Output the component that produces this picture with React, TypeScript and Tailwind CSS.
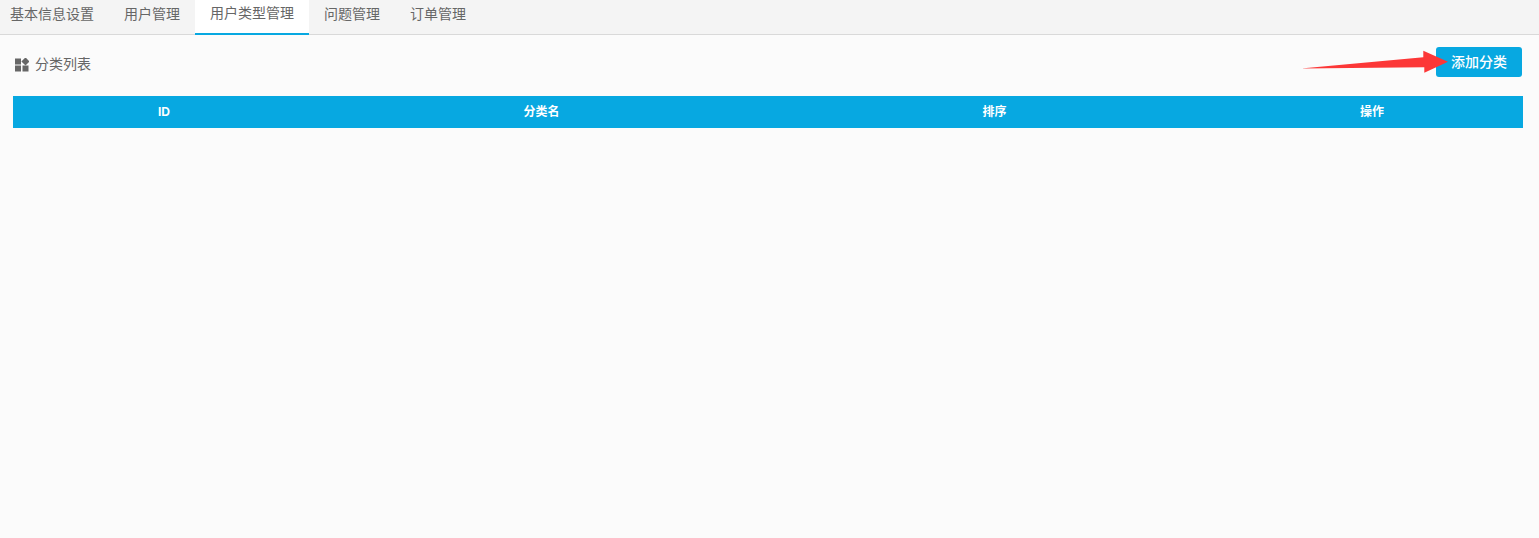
export default function App() {
  const tabs = ["基本信息设置", "用户管理", "用户类型管理", "问题管理", "订单管理"];
  return (
    <div className="relative h-[538px] w-full overflow-hidden bg-[#fbfbfb] font-['Liberation_Sans','Noto_Sans_CJK_SC',sans-serif] text-[#666]">
      <div className="flex h-[35px] border-b border-[#d9d9d9] bg-[#f4f4f4]">
        {tabs.map((t, i) => (
          <div
            key={t}
            className={
              i === 2
                ? "-mb-px flex h-[35px] items-center border-b-2 border-[#07a8e1] bg-white px-[15px] pb-[7px] text-sm leading-none"
                : "flex h-[34px] items-center px-[15px] pb-[6px] text-sm leading-none first:pl-[10px]"
            }
          >
            {t}
          </div>
        ))}
      </div>
      <div className="flex items-start justify-between pl-[15px] pr-[17px] pt-3">
        <div className="mt-[6px] flex h-[24px] items-center gap-[6px] text-sm">
          <svg width="14" height="14" viewBox="0 0 14 14" fill="#666">
            <rect x="0" y="0.5" width="6" height="6" />
            <rect x="0" y="7.5" width="6" height="6" />
            <rect x="7.5" y="7.5" width="6" height="6" />
            <rect x="7.6" y="0.6" width="5.8" height="5.8" transform="rotate(45 10.5 3.5)" />
          </svg>
          <span className="pb-[2px]">分类列表</span>
        </div>
        <button className="h-[30px] w-[86px] rounded-[3px] bg-[#07a8e1] text-center text-sm font-medium text-white">
          添加分类
        </button>
      </div>
      <div className="mx-[13px] mt-[19px] grid h-8 w-[1510px] grid-cols-[302px_453px_453px_302px] items-center bg-[#07a8e1] text-center text-xs font-bold text-white">
        <div>ID</div>
        <div>分类名</div>
        <div>排序</div>
        <div>操作</div>
      </div>
      <svg className="absolute left-[1300px] top-[48px]" width="150" height="28" viewBox="1300 48 150 28">
        <polygon
          points="1301,68.6 1423.3,57.3 1423.3,50.7 1448,61.7 1424.3,72.7 1424.3,67.2"
          fill="#fc3737"
        />
      </svg>
    </div>
  );
}
